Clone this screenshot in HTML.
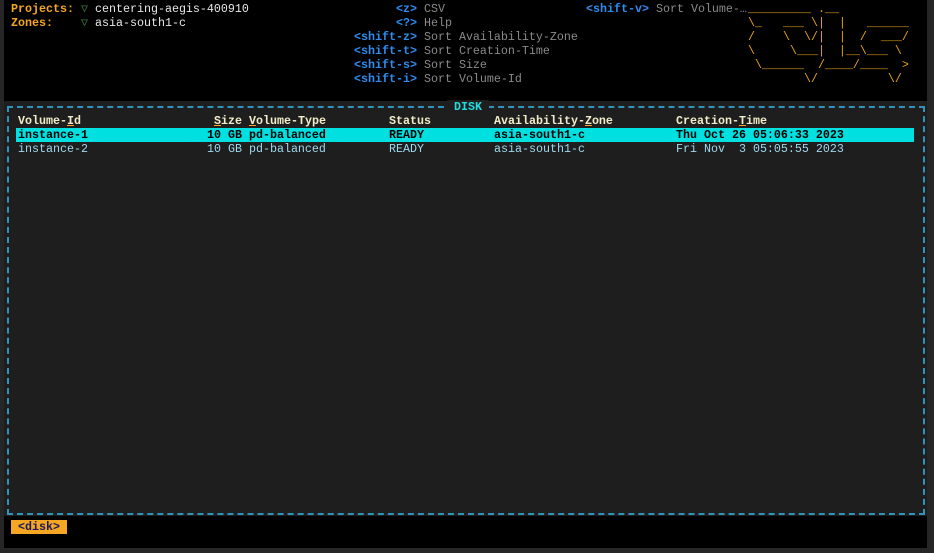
<!DOCTYPE html>
<html><head><meta charset="utf-8"><style>
*{margin:0;padding:0;box-sizing:border-box}
body{width:934px;height:553px;background:#262626;overflow:hidden;font-family:"Liberation Mono","DejaVu Sans Mono",monospace;font-size:11.67px;line-height:14px;position:relative}
.t{position:absolute;white-space:pre}
#top{position:absolute;left:4px;top:0;width:923px;height:101px;background:#000}
#mid{position:absolute;left:4px;top:101px;width:923px;height:415px;background:#1e1e1e}
#bot{position:absolute;left:4px;top:516px;width:923px;height:32px;background:#000}
#box{position:absolute;left:7px;top:106px;width:918px;height:409px;border:2px dashed #2f93bd}
.o{color:#f5a623;font-weight:bold}
.g{color:#3b7a3b}
.w{color:#e8e8e8}
.b{color:#2d8cf0;font-weight:bold}
.d{color:#8a8a8a}
.h{color:#f3ecc8;font-weight:bold}
.u{text-decoration:underline;text-decoration-color:#f5a623}
.r{color:#9fd8ee}
.lg{color:#e8a317}
</style></head><body>
<div id="top"></div><div id="mid"></div><div id="bot"></div>
<div id="box"></div>
<div class="t" style="left:447px;top:100px;background:#1e1e1e;color:#22dde0;font-weight:bold"> DISK </div>

<div class="t" style="left:11px;top:2px"><span class="o">Projects:</span> <span class="g">▽</span> <span class="w">centering-aegis-400910</span></div>
<div class="t" style="left:11px;top:16px"><span class="o">Zones:</span></div>
<div class="t" style="left:81px;top:16px"><span class="g">▽</span> <span class="w">asia-south1-c</span></div>

<div class="t" style="left:354px;top:2px"><span class="b">      &lt;z&gt;</span> <span class="d">CSV</span></div>
<div class="t" style="left:354px;top:16px"><span class="b">      &lt;?&gt;</span> <span class="d">Help</span></div>
<div class="t" style="left:354px;top:30px"><span class="b">&lt;shift-z&gt;</span> <span class="d">Sort Availability-Zone</span></div>
<div class="t" style="left:354px;top:44px"><span class="b">&lt;shift-t&gt;</span> <span class="d">Sort Creation-Time</span></div>
<div class="t" style="left:354px;top:58px"><span class="b">&lt;shift-s&gt;</span> <span class="d">Sort Size</span></div>
<div class="t" style="left:354px;top:72px"><span class="b">&lt;shift-i&gt;</span> <span class="d">Sort Volume-Id</span></div>
<div class="t" style="left:586px;top:2px"><span class="b">&lt;shift-v&gt;</span> <span class="d">Sort Volume-…</span></div>

<div class="t lg" style="left:748px;top:2px">_________ .__
\_   ___ \|  |   ______
/    \  \/|  |  /  ___/
\     \___|  |__\___ \
 \______  /____/____  &gt;
        \/          \/</div>

<div class="t h" style="left:18px;top:114px">Volume-<span class="u">I</span>d</div>
<div class="t h" style="left:214px;top:114px"><span class="u">S</span>ize <span class="u">V</span>olume-Type</div>
<div class="t h" style="left:389px;top:114px">Status</div>
<div class="t h" style="left:494px;top:114px">Availability-<span class="u">Z</span>one</div>
<div class="t h" style="left:676px;top:114px">Creation-<span class="u">T</span>ime</div>

<div style="position:absolute;left:16px;top:128px;width:898px;height:14px;background:#00e0e0"></div>
<div class="t" style="left:18px;top:128px;color:#000;font-weight:bold">instance-1</div>
<div class="t" style="left:207px;top:128px;color:#000;font-weight:bold">10 GB pd-balanced</div>
<div class="t" style="left:389px;top:128px;color:#000;font-weight:bold">READY</div>
<div class="t" style="left:494px;top:128px;color:#000;font-weight:bold">asia-south1-c</div>
<div class="t" style="left:676px;top:128px;color:#000;font-weight:bold">Thu Oct 26 05:06:33 2023</div>

<div class="t r" style="left:18px;top:142px">instance-2</div>
<div class="t r" style="left:207px;top:142px">10 GB pd-balanced</div>
<div class="t r" style="left:389px;top:142px">READY</div>
<div class="t r" style="left:494px;top:142px">asia-south1-c</div>
<div class="t r" style="left:676px;top:142px">Fri Nov  3 05:05:55 2023</div>

<div class="t" style="left:11px;top:520px;width:56px;height:14px;background:#f5a623;color:#1a1a5a;font-weight:bold;padding-left:7px">&lt;disk&gt;</div>
</body></html>
